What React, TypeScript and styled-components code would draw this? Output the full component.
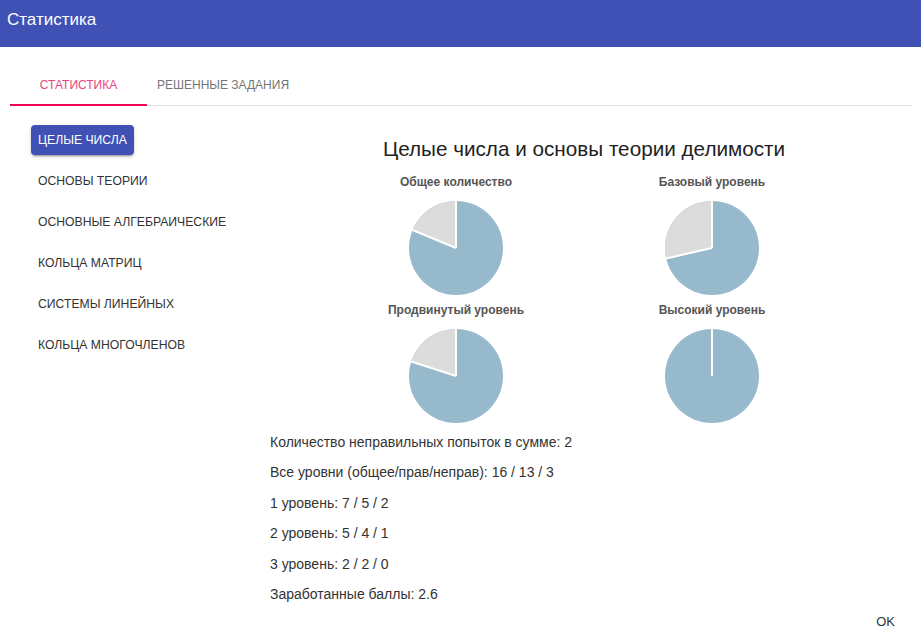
import React, { useState } from 'react';
import styled, { createGlobalStyle } from 'styled-components';

const GlobalStyle = createGlobalStyle`
  html, body {
    margin: 0;
    padding: 0;
    background: #fff;
    font-family: 'Liberation Sans', Arial, sans-serif;
    overflow: hidden;
  }
`;

const Header = styled.header`
  height: 47px;
  background-color: #3f51b5;
  display: flex;
  align-items: center;
  padding: 0 7px;
  box-sizing: border-box;
`;

const HeaderTitle = styled.h1`
  margin: 0 0 8px;
  font-size: 17px;
  font-weight: 400;
  color: #fff;
`;

const Body = styled.div`
  padding: 10px 9px 0 10px;
`;

const TabBar = styled.div`
  display: flex;
  height: 48px;
  border-bottom: 1px solid #e0e0e0;
`;

const Tab = styled.button<{ $active: boolean }>`
  position: relative;
  background: none;
  border: none;
  padding: 8px 10px 0;
  min-width: 137px;
  font-family: 'Liberation Sans', Arial, sans-serif;
  font-size: 12px;
  text-transform: uppercase;
  cursor: pointer;
  color: ${(p) => (p.$active ? '#e8467c' : '#757575')};

  &::after {
    content: '';
    position: absolute;
    left: 0;
    right: 0;
    bottom: -1px;
    height: 2px;
    background: ${(p) => (p.$active ? '#f50057' : 'transparent')};
  }
`;

const Content = styled.div`
  display: flex;
  padding-top: 19px;
`;

const Menu = styled.nav`
  width: 260px;
  flex-shrink: 0;
  display: flex;
  flex-direction: column;
  align-items: flex-start;
  gap: 11px;
  padding-left: 21px;
  box-sizing: border-box;
`;

const MenuItem = styled.button<{ $active: boolean }>`
  height: 30px;
  padding: 0 7px;
  border: none;
  border-radius: 4px;
  font-family: 'Liberation Sans', Arial, sans-serif;
  font-size: 12.2px;
  text-transform: uppercase;
  cursor: pointer;
  color: ${(p) => (p.$active ? '#fff' : '#333')};
  background: ${(p) => (p.$active ? '#3f51b5' : 'transparent')};
  box-shadow: ${(p) =>
    p.$active
      ? '0 3px 1px -2px rgba(0,0,0,0.2), 0 2px 2px 0 rgba(0,0,0,0.14), 0 1px 5px 0 rgba(0,0,0,0.12)'
      : 'none'};
`;

const Main = styled.section`
  flex: 1;
  display: flex;
  flex-direction: column;
  padding-right: 14px;
`;

const Title = styled.h2`
  margin: 9px 0 0;
  text-align: center;
  font-size: 20.7px;
  font-weight: 400;
  line-height: 30px;
  color: #222;
`;

const ChartGrid = styled.div`
  display: grid;
  grid-template-columns: 256px 256px;
  justify-content: center;
  margin-top: 10px;
`;

const ChartCell = styled.div`
  height: 128px;
  display: flex;
  flex-direction: column;
  align-items: center;
`;

const ChartTitle = styled.div`
  font-size: 12px;
  font-weight: 700;
  line-height: 16px;
  color: #555;
  margin-bottom: 10px;
`;

const Stats = styled.div`
  display: flex;
  flex-direction: column;
  gap: 10.4px;
  margin-top: 2px;
`;

const StatLine = styled.p`
  margin: 0;
  font-size: 14px;
  line-height: 20px;
  color: #333;
`;

const Footer = styled.div`
  display: flex;
  justify-content: flex-end;
  padding: 0 9px 0 0;
`;

const OkButton = styled.button`
  background: none;
  border: none;
  height: 36px;
  padding: 0 8px;
  font-family: 'Liberation Sans', Arial, sans-serif;
  font-size: 13px;
  color: #333;
  cursor: pointer;
`;

interface PieProps {
  right: number;
  total: number;
}

const Pie: React.FC<PieProps> = ({ right, total }) => {
  const r = 47;
  const c = 48;
  const wrongFrac = (total - right) / total;
  const angle = wrongFrac * 2 * Math.PI;
  // gray slice goes counter-clockwise from 12 o'clock
  const x = c - r * Math.sin(angle);
  const y = c - r * Math.cos(angle);
  const large = wrongFrac > 0.5 ? 1 : 0;
  return (
    <svg width="96" height="96" viewBox="0 0 96 96">
      <circle cx={c} cy={c} r={r} fill="#97b9cc" />
      {wrongFrac > 0 && (
        <path
          d={`M${c} ${c} L${c} ${c - r} A${r} ${r} 0 ${large} 0 ${x} ${y} Z`}
          fill="#dcdcdc"
        />
      )}
      <line x1={c} y1={c} x2={c} y2={c - r} stroke="#fff" strokeWidth="2" />
      {wrongFrac > 0 && (
        <line x1={c} y1={c} x2={x} y2={y} stroke="#fff" strokeWidth="2" />
      )}
    </svg>
  );
};

const menu = [
  'Целые числа',
  'Основы теории',
  'Основные алгебраические',
  'Кольца матриц',
  'Системы линейных',
  'Кольца многочленов',
];

const charts = [
  { title: 'Общее количество', right: 13, total: 16 },
  { title: 'Базовый уровень', right: 5, total: 7 },
  { title: 'Продвинутый уровень', right: 4, total: 5 },
  { title: 'Высокий уровень', right: 2, total: 2 },
];

const stats = [
  'Количество неправильных попыток в сумме: 2',
  'Все уровни (общее/прав/неправ): 16 / 13 / 3',
  '1 уровень: 7 / 5 / 2',
  '2 уровень: 5 / 4 / 1',
  '3 уровень: 2 / 2 / 0',
  'Заработанные баллы: 2.6',
];

const App: React.FC = () => {
  const [tab, setTab] = useState(0);
  const [topic, setTopic] = useState(0);

  return (
    <>
      <GlobalStyle />
      <Header>
        <HeaderTitle>Статистика</HeaderTitle>
      </Header>
      <Body>
        <TabBar>
          <Tab $active={tab === 0} onClick={() => setTab(0)}>Статистика</Tab>
          <Tab $active={tab === 1} onClick={() => setTab(1)}>Решенные задания</Tab>
        </TabBar>
        <Content>
          <Menu>
            {menu.map((m, i) => (
              <MenuItem key={m} $active={topic === i} onClick={() => setTopic(i)}>
                {m}
              </MenuItem>
            ))}
          </Menu>
          <Main>
            <Title>Целые числа и основы теории делимости</Title>
            <ChartGrid>
              {charts.map((c) => (
                <ChartCell key={c.title}>
                  <ChartTitle>{c.title}</ChartTitle>
                  <Pie right={c.right} total={c.total} />
                </ChartCell>
              ))}
            </ChartGrid>
            <Stats>
              {stats.map((s) => (
                <StatLine key={s}>{s}</StatLine>
              ))}
            </Stats>
          </Main>
        </Content>
        <Footer>
          <OkButton>OK</OkButton>
        </Footer>
      </Body>
    </>
  );
};

export default App;
